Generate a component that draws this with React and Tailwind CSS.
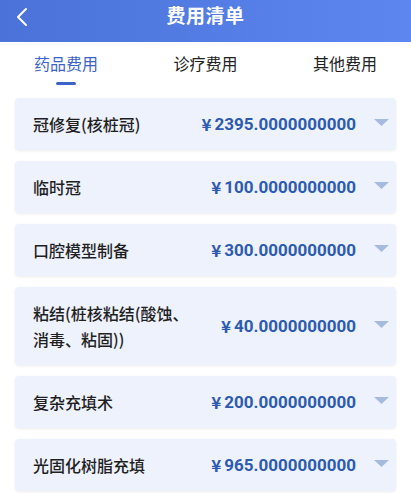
import React from "react";

const items = [
  { name: "冠修复(核桩冠)", price: "2395.0000000000" },
  { name: "临时冠", price: "100.0000000000" },
  { name: "口腔模型制备", price: "300.0000000000" },
  { name: "粘结(桩核粘结(酸蚀、消毒、粘固))", price: "40.0000000000" },
  { name: "复杂充填术", price: "200.0000000000" },
  { name: "光固化树脂充填", price: "965.0000000000" },
];

const cjk = { fontFamily: '"Noto Sans CJK SC", "Noto Sans", sans-serif' };
const num = { fontFamily: 'Roboto, "Noto Sans CJK SC", sans-serif' };

export default function App() {
  return (
    <div className="w-[411px] h-[495px] overflow-hidden bg-white" style={cjk}>
      <div className="h-[42px] bg-gradient-to-r from-[#4a72d9] to-[#5d87ef] relative flex items-start justify-center">
        <div className="absolute left-[15px] top-[7px]">
          <svg width="14" height="20" viewBox="0 0 14 20">
            <path d="M11 2 L3 10 L11 18" fill="none" stroke="white" strokeWidth="2" strokeLinecap="round" strokeLinejoin="round" />
          </svg>
        </div>
        <div className="text-white text-[19px] font-bold leading-[30px] tracking-[0.5px]">费用清单</div>
      </div>
      <div className="flex justify-between px-[34px] pt-[10px] h-[55px]">
        <div className="flex flex-col items-center">
          <span className="text-[16px] leading-[22px] text-[#3c64c8]">药品费用</span>
          <span className="mt-[8px] w-[20px] h-[3px] rounded-full bg-[#3c64c8]"></span>
        </div>
        <span className="text-[16px] leading-[22px] text-[#222]">诊疗费用</span>
        <span className="text-[16px] leading-[22px] text-[#222]">其他费用</span>
      </div>
      <div className="flex flex-col gap-[11px] px-[15px] pt-[1px]">
        {items.map((it, i) => (
          <div
            key={i}
            className="flex items-center rounded-[4px] bg-[#eef2fd] pl-[18px] pr-[7px] py-[13px] min-h-[52px] shadow-[0_1px_3px_rgba(0,0,0,0.08)]"
          >
            <div className="max-w-[162px] text-[16px] leading-[26px] font-medium text-[#1f1f1f]">{it.name}</div>
            <div className="ml-auto flex items-center text-[#2d5bb0] font-bold text-[17px] leading-[26px] whitespace-nowrap" style={num}>
              <span className="mr-[3px] text-[17px]" style={cjk}>¥</span>
              <span>{it.price}</span>
            </div>
            <div className="ml-[18px] mt-[-3px] w-[15px] flex justify-center">
              <svg width="15" height="7" viewBox="0 0 15 7">
                <path d="M0 0 L15 0 L7.5 7 Z" fill="#a5badf" />
              </svg>
            </div>
          </div>
        ))}
      </div>
    </div>
  );
}
